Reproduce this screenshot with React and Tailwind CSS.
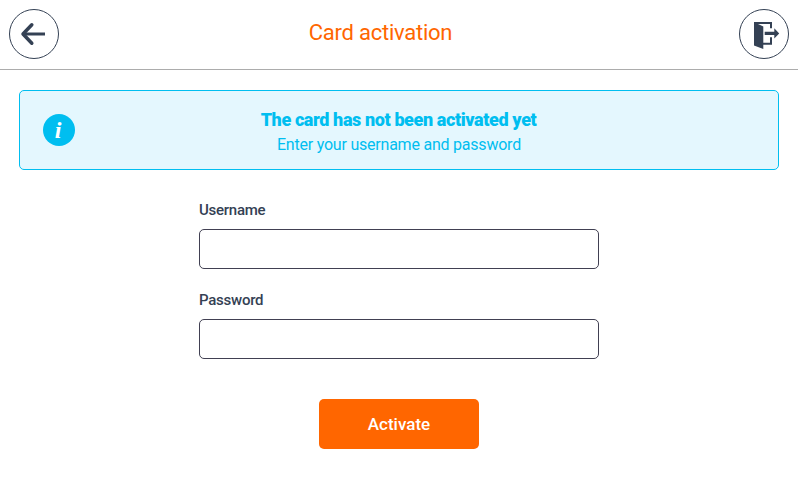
import React, { useState } from "react";

const BackIcon = () => (
    <svg className="shrink-0" width="50" height="50" viewBox="0 0 50 50" fill="none" stroke="#344154">
        <path d="M36 25H14" strokeWidth="3" />
        <path d="M22.8 15.8L14 25L22.8 34.2" strokeWidth="3.5" strokeLinecap="round" strokeLinejoin="round" />
    </svg>
);

const ExitIcon = () => (
    <svg className="shrink-0" width="50" height="50" viewBox="0 0 50 50" fill="#344154">
        <path d="M15 13H33V19.3H31V15H19L24.3 17.6V40L15 36.6Z" />
        <path d="M24 33.8H31V28.3H33V35.8H24Z" />
        <path d="M25.7 22.7H35.3V19.3L40.2 24.4L35.3 29.5V26.1H25.7Z" />
    </svg>
);

const RoundButton = ({ label, children }) => (
    <button aria-label={label} className="w-[50px] h-[50px] shrink-0 flex items-center justify-center rounded-full border border-[#344154]">
        {children}
    </button>
);

const Field = ({ label, type, value, onChange }) => (
    <label className="block h-[90px]">
        <span className="block h-[29px] text-[15px] leading-5 tracking-[-0.25px] font-medium text-[#344154]">{label}</span>
        <input
            type={type}
            value={value}
            onChange={(e) => onChange(e.target.value)}
            className="block w-full h-10 px-3 rounded-[5px] border border-[#414052] bg-white outline-none"
        />
    </label>
);

export default function App() {
    const [username, setUsername] = useState("");
    const [password, setPassword] = useState("");

    return (
        <div className="w-[798px] h-[477px] overflow-hidden bg-white font-['Roboto',sans-serif]">
            <header className="h-[70px] px-[9px] pt-[9px] flex items-start justify-between border-b border-[#acacac]">
                <RoundButton label="Back"><BackIcon /></RoundButton>
                <h1 className="pt-2 pr-[37px] text-[22px] leading-8 tracking-[-0.25px] text-[#ff6600]">Card activation</h1>
                <RoundButton label="Exit"><ExitIcon /></RoundButton>
            </header>

            <main>
                <div className="mx-[19px] mt-5 h-20 pt-[3px] pl-[23px] pr-[55px] flex items-center rounded-[5px] border border-[#00bef0] bg-[#e4f7fe] text-[#00bef0]">
                    <span className="w-8 h-8 mb-[3px] pr-0.5 shrink-0 rounded-full bg-[#00bef0] text-white text-center font-['Liberation_Serif',serif] italic font-bold text-[24px] leading-[33px]">i</span>
                    <div className="flex-1 text-center">
                        <p className="text-[18px] leading-[25px] tracking-[-0.39px] pr-px font-black">The card has not been activated yet</p>
                        <p className="text-[16px] leading-[25px] tracking-[-0.22px]">Enter your username and password</p>
                    </div>
                </div>

                <form className="w-[400px] mx-auto mt-[30px]" onSubmit={(e) => e.preventDefault()}>
                    <Field label="Username" type="text" value={username} onChange={setUsername} />
                    <Field label="Password" type="password" value={password} onChange={setPassword} />
                    <button className="block w-40 h-[50px] pt-0.5 mx-auto mt-[19px] rounded-[5px] bg-[#ff6600] text-white text-[17px] font-medium">
                        Activate
                    </button>
                </form>
            </main>
        </div>
    );
}
